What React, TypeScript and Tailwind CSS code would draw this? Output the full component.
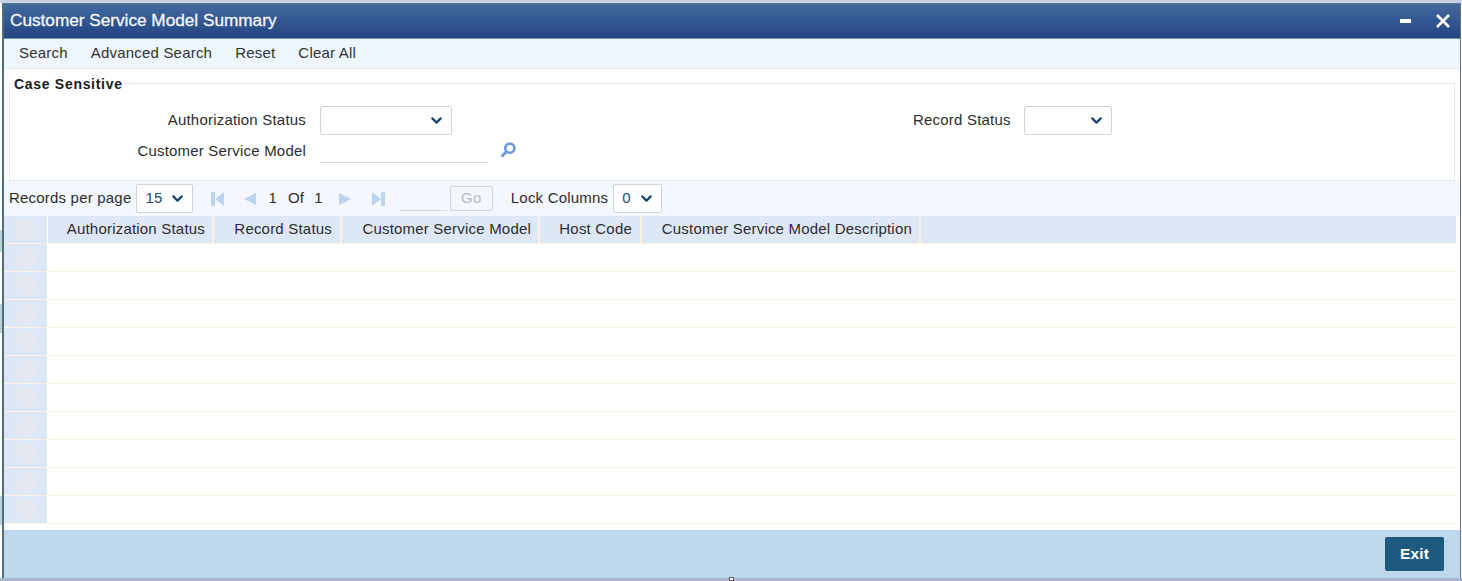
import { ChevronDown } from "lucide-react";

const columns = [
  { label: "Authorization Status", width: "w-[166px]", pad: "pr-[7px]" },
  { label: "Record Status", width: "w-[128px]", pad: "pr-[8px]" },
  { label: "Customer Service Model", width: "w-[198px]", pad: "pr-[7px]" },
  { label: "Host Code", width: "w-[102px]", pad: "pr-[8px]" },
  { label: "Customer Service Model Description", width: "w-[279px]", pad: "pr-[7px]" },
];

const rows = Array.from({ length: 10 }, (_, i) => i);

function SelectBox({ value, className }: { value?: string; className: string }) {
  return (
    <div className={`flex h-[29px] shrink-0 items-center justify-between rounded-[2px] border border-[#ced4dc] bg-white pl-2 pr-[6px] text-[#1b4a7a] ${className}`}>
      <span>{value}</span>
      <ChevronDown size={17} strokeWidth={3} className="text-[#15416e]" />
    </div>
  );
}

function PagerIcon({ d }: { d: string }) {
  return (
    <svg width="14" height="14" viewBox="0 0 14 14" className="shrink-0 fill-[#bdd3ee]">
      <path d={d} />
    </svg>
  );
}

export default function App() {
  return (
    <div className="relative flex h-[581px] w-[1462px] flex-col overflow-hidden bg-white font-['Liberation_Sans',Arial,sans-serif] text-[15px] tracking-[0.2px] text-[#2d2d2d]">
      {/* bits of the page behind the window */}
      <div className="absolute left-0 top-[230px] h-[22px] w-[2px] bg-[#bcd0d8]" />
      <div className="absolute left-0 top-[304px] h-[29px] w-[2px] bg-[#bcd0d8]" />
      <div className="absolute left-0 top-[496px] h-[29px] w-[2px] bg-[#bcd0d8]" />
      <div className="absolute bottom-0 left-[729px] h-[4px] w-[5px] border border-[#555] bg-white" />

      <div className="h-[3px] shrink-0 bg-[#c9d0e1]" />
      <div className="ml-[2px] mr-px flex min-h-0 flex-1 flex-col border-l-2 border-r border-l-[#4b7277] border-r-[#6f7377]">
        {/* title bar */}
        <div className="flex h-[36px] shrink-0 items-center justify-between border-t border-b border-t-[#5b7d8f] border-b-[#6d9a9c] bg-gradient-to-b from-[#44699f] to-[#234583] pl-[6px] pr-[10px]">
          <h1 className="text-[17.2px] font-normal tracking-normal text-[#f4f7fb] [-webkit-text-stroke:0.3px_#f4f7fb]">Customer Service Model Summary</h1>
          <div className="flex items-center gap-[25px]">
            <div className="h-[4px] w-[11px] bg-white" />
            <svg width="14" height="14" viewBox="0 0 14 14" className="stroke-white" strokeWidth="2.6">
              <path d="M1 1 L13 13 M13 1 L1 13" />
            </svg>
          </div>
        </div>

        {/* toolbar */}
        <div className="flex h-[30px] shrink-0 items-center gap-[23px] border-b border-b-[#e4e8ee] bg-[#eef5fd] pl-[15px] text-[#333]">
          <span>Search</span>
          <span>Advanced Search</span>
          <span>Reset</span>
          <span>Clear All</span>
        </div>

        {/* search form */}
        <div className="h-[112px] shrink-0 bg-white px-[5px] pt-[6px]">
          <fieldset className="h-[106px] border border-[#e3e9f4] pl-[3px]">
            <legend className="relative top-px ml-px text-[14px] font-bold leading-[16px] tracking-[0.7px] text-[#1c1c1c]">Case Sensitive</legend>
            <div className="mt-[15px] flex">
              <div className="flex w-[900px] shrink-0 flex-col">
                <div className="flex items-center">
                  <label className="w-[293px] text-right">Authorization Status</label>
                  <SelectBox className="ml-[14px] w-[132px]" />
                </div>
                <div className="mt-[3px] flex items-center">
                  <label className="w-[293px] text-right">Customer Service Model</label>
                  <div className="mb-[2px] ml-[14px] h-[25px] w-[168px] border-b border-b-[#d5dae2]" />
                  <svg width="16" height="16" viewBox="0 0 16 16" fill="none" className="mb-[3px] ml-[12px] stroke-[#6a9ad8]">
                    <circle cx="9.8" cy="6.2" r="4.6" strokeWidth="2.6" />
                    <path d="M6.4 9.8 L1.6 14.6" strokeWidth="2.8" />
                  </svg>
                </div>
              </div>
              <div className="flex items-start">
                <label className="w-[97px] whitespace-nowrap pt-[3px] text-right">Record Status</label>
                <SelectBox className="ml-[14px] w-[88px]" />
              </div>
            </div>
          </fieldset>
        </div>

        {/* pager */}
        <div className="flex h-[35px] shrink-0 items-center bg-[#f4f8fe] pl-[5px]">
          <span>Records per page</span>
          <SelectBox value="15" className="ml-[5px] w-[57px]" />
          <div className="ml-[18px] flex items-center">
            <PagerIcon d="M0 0 H4 V14 H0 Z M13 0 V14 L4 7 Z" />
            <div className="ml-[18px]"><PagerIcon d="M13 1 V13 L1 7 Z" /></div>
            <span className="ml-[11px]">1</span>
            <span className="ml-[11px]">Of</span>
            <span className="ml-[10px]">1</span>
            <div className="ml-[15px]"><PagerIcon d="M1 1 V13 L13 7 Z" /></div>
            <div className="ml-[20px]"><PagerIcon d="M0 0 V14 L9 7 Z M9 0 H13 V14 H9 Z" /></div>
          </div>
          <div className="ml-[13px] h-[24px] w-[48px] border-b border-b-[#d5dae2]" />
          <div className="ml-[3px] flex h-[25px] w-[43px] items-center justify-center rounded-[2px] border border-[#ced4dc] text-[#b5bac0]">Go</div>
          <span className="ml-[18px]">Lock Columns</span>
          <SelectBox value="0" className="ml-[5px] w-[49px]" />
        </div>

        {/* grid */}
        <div className="flex flex-col pr-[4px]">
          <div className="flex h-[28px] border-b border-b-[#fdf0dc] bg-[#dee7f6]">
            <div className="flex w-[44px] items-center justify-center border-r border-r-white pr-px">
              <div className="size-[18px] bg-[#e4e8f0]" />
            </div>
            {columns.map((col) => (
              <div key={col.label} className={`flex items-center justify-end border-r-2 border-r-[#fdf0dc] ${col.pad} ${col.width}`}>
                {col.label}
              </div>
            ))}
          </div>
          {rows.map((row) => (
            <div key={row} className="flex h-[28px] border-b border-b-[#fdf3e3] bg-white">
              <div className="flex w-[43px] items-center justify-center bg-[#dee7f6]">
                <div className="size-[18px] bg-[#e4e8f0]" />
              </div>
            </div>
          ))}
        </div>

        {/* footer */}
        <div className="mt-auto flex h-[48px] shrink-0 items-start justify-end bg-[#bdd7ed] pr-[16px] pt-[7px]">
          <button className="h-[34px] w-[59px] rounded-[2px] bg-[#1d5a80] text-[15.5px] font-bold text-white">Exit</button>
        </div>
      </div>
      <div className="h-[3px] shrink-0 bg-[#abb5cb]" />
    </div>
  );
}
